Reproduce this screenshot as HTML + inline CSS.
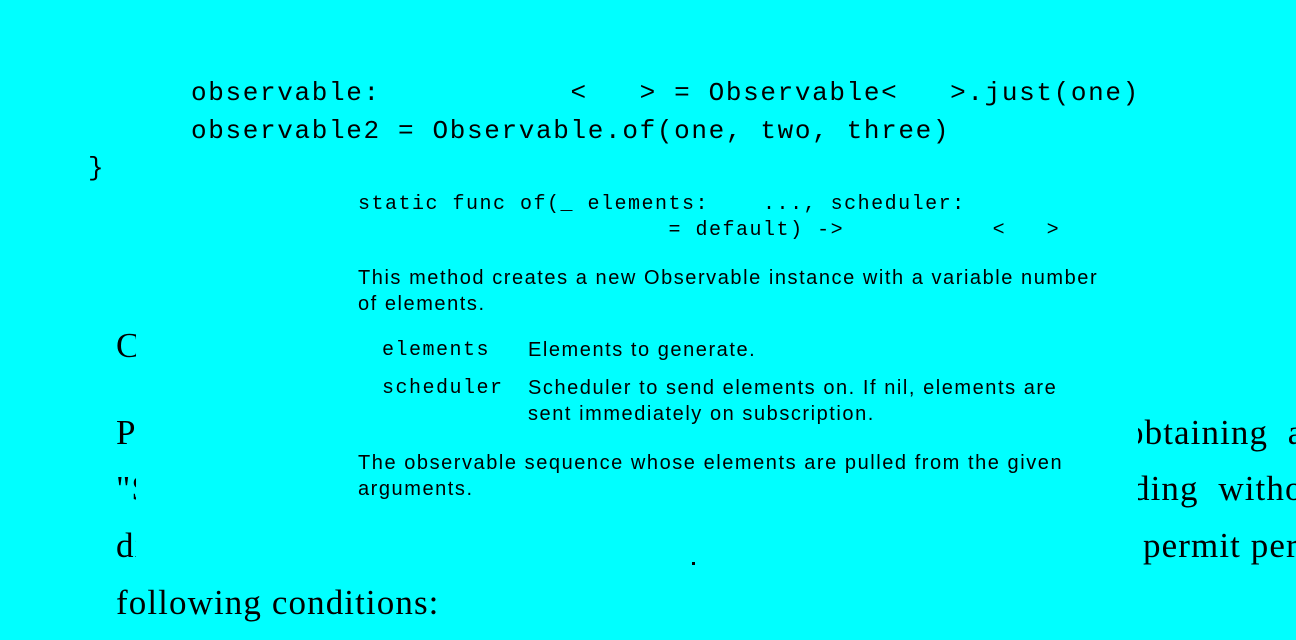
<!DOCTYPE html>
<html><head><meta charset="utf-8"><style>
html,body{margin:0;padding:0;background:#00ffff;width:1296px;height:640px;overflow:hidden;position:relative;color:#000}
.a{position:absolute;white-space:pre;margin:0}
.code{font-family:"Liberation Mono",monospace;font-size:26px;letter-spacing:1.65px;line-height:26px}
.m{font-family:"Liberation Mono",monospace;font-size:20px;letter-spacing:1.5px;line-height:20px}
.s{font-family:"Liberation Sans",sans-serif;font-size:20px;letter-spacing:1.55px;line-height:26px}
.ser{font-family:"Liberation Serif",serif;font-size:35px;letter-spacing:1.1px;line-height:40px;font-weight:300}
.clipL{position:absolute;left:0;top:0;width:136px;height:640px;overflow:hidden}
.clipR{position:absolute;left:1138px;top:0;width:158px;height:640px;overflow:hidden}
</style></head><body>
<div class="a code" style="left:191px;top:80px">observable:           &lt;   &gt; = Observable&lt;   &gt;.just(one)</div>
<div class="a code" style="left:191px;top:118px">observable2 = Observable.of(one, two, three)</div>
<div class="a code" style="left:88px;top:155px">}</div>

<div class="a m" style="left:358px;top:195px">static func of(_ elements:    ..., scheduler:</div>
<div class="a m" style="left:358px;top:221px">                       = default) -&gt;           &lt;   &gt;</div>

<div class="a s" style="left:358px;top:265px">This method creates a new Observable instance with a variable number<br>of elements.</div>
<div class="a m" style="left:382px;top:341px">elements</div>
<div class="a s" style="left:528px;top:337px">Elements to generate.</div>
<div class="a m" style="left:382px;top:379px">scheduler</div>
<div class="a s" style="left:528px;top:375px">Scheduler to send elements on. If nil, elements are<br>sent immediately on subscription.</div>
<div class="a s" style="left:358px;top:450px">The observable sequence whose elements are pulled from the given<br>arguments.</div>
<div class="a" style="left:692px;top:562px;width:3px;height:3px;background:#000"></div>

<div class="clipL">
<div class="a ser" style="left:116px;top:326px">Copyright</div>
<div class="a ser" style="left:116px;top:413px">Permission</div>
<div class="a ser" style="left:116px;top:469px">"Software"</div>
<div class="a ser" style="left:116px;top:526px">distribute</div>
</div>
<div class="a ser" style="left:116px;top:583px">following conditions:</div>
<div class="clipR">
<div class="a ser" style="left:-12px;top:413px">obtaining&nbsp; a copy</div>
<div class="a ser" style="left:-6px;top:469px">ding&nbsp; without</div>
<div class="a ser" style="left:5px;top:526px">permit persons</div>
</div>
</body></html>
